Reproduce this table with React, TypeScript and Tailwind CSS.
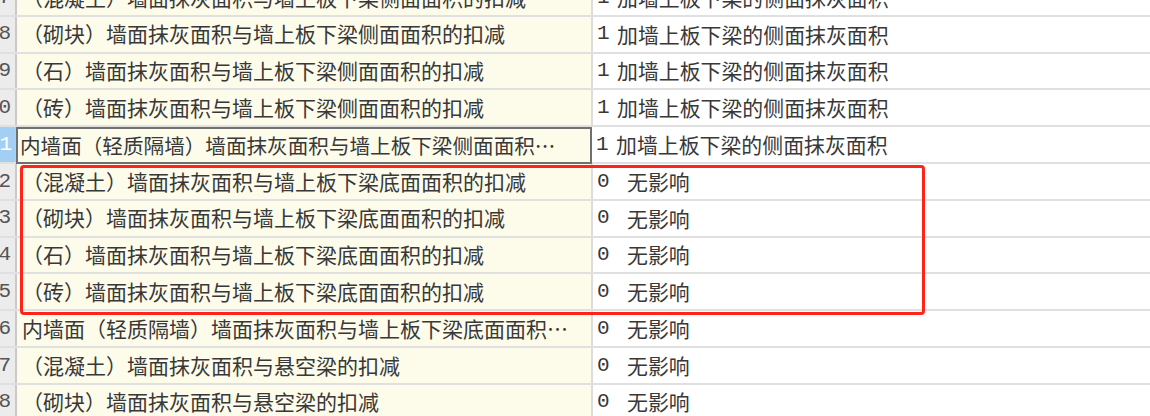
import React from 'react';

interface GridRow {
  no: string;
  name: string;
  value: string;
  desc: string;
}

const side = '加墙上板下梁的侧面抹灰面积';

const rows: GridRow[] = [
  { no: '97', name: '（混凝土）墙面抹灰面积与墙上板下梁侧面面积的扣减', value: '1', desc: side },
  { no: '98', name: '（砌块）墙面抹灰面积与墙上板下梁侧面面积的扣减', value: '1', desc: side },
  { no: '99', name: '（石）墙面抹灰面积与墙上板下梁侧面面积的扣减', value: '1', desc: side },
  { no: '100', name: '（砖）墙面抹灰面积与墙上板下梁侧面面积的扣减', value: '1', desc: side },
  { no: '101', name: '内墙面（轻质隔墙）墙面抹灰面积与墙上板下梁侧面面积…', value: '1', desc: side },
  { no: '102', name: '（混凝土）墙面抹灰面积与墙上板下梁底面面积的扣减', value: '0', desc: '无影响' },
  { no: '103', name: '（砌块）墙面抹灰面积与墙上板下梁底面面积的扣减', value: '0', desc: '无影响' },
  { no: '104', name: '（石）墙面抹灰面积与墙上板下梁底面面积的扣减', value: '0', desc: '无影响' },
  { no: '105', name: '（砖）墙面抹灰面积与墙上板下梁底面面积的扣减', value: '0', desc: '无影响' },
  { no: '106', name: '内墙面（轻质隔墙）墙面抹灰面积与墙上板下梁底面面积…', value: '0', desc: '无影响' },
  { no: '107', name: '（混凝土）墙面抹灰面积与悬空梁的扣减', value: '0', desc: '无影响' },
  { no: '108', name: '（砌块）墙面抹灰面积与悬空梁的扣减', value: '0', desc: '无影响' },
];

const selectedNo = '101';

export default function App() {
  return (
    <div className="relative w-[1150px] h-[416px] overflow-hidden bg-white text-[#383838] font-['Noto_Sans_CJK_SC',sans-serif]">
      <div className="-mt-[20px]">
        {rows.map(row => {
          const selected = row.no === selectedNo;
          return (
            <div key={row.no} className="flex h-[36.8px] border-b-2 border-[#e0e0e0]">
              {/* row header, numbers are clipped on the left */}
              <div
                className={
                  selected
                    ? 'w-[17px] shrink-0 flex items-center justify-end overflow-hidden pr-[3px] bg-[#a3cff5] text-white border-r-2 border-[#c9c9c9] font-["Liberation_Mono",monospace] text-[21px]'
                    : 'w-[17px] shrink-0 flex items-center justify-end overflow-hidden pr-[4px] bg-[#ececec] text-[#555] border-r-2 border-[#c9c9c9] font-["Liberation_Mono",monospace] text-[21px]'
                }
              >
                <span className="whitespace-nowrap">{row.no}</span>
              </div>

              {/* name */}
              <div
                className={
                  selected
                    ? 'w-[576px] shrink-0 flex items-center overflow-hidden whitespace-nowrap bg-[#fdfceb] pl-[2px] text-[20.6px] border-2 border-[#707070] -mb-[2px] -ml-[1px]'
                    : 'w-[576px] shrink-0 flex items-center overflow-hidden whitespace-nowrap bg-[#fdfceb] pl-[5px] text-[21px] border-r-2 border-[#dcdcdc]'
                }
              >
                {row.name}
              </div>

              {/* value + description */}
              <div className="flex-1 flex items-center whitespace-nowrap pl-[4px]">
                <span className="w-[20px] font-['Liberation_Mono',monospace] text-[21px]">{row.value}</span>
                <span className={row.value === '0' ? 'pl-[10px] text-[20.9px]' : 'text-[20.9px]'}>{row.desc}</span>
              </div>
            </div>
          );
        })}
      </div>

      {/* red highlight drawn over the grid */}
      <div className="absolute left-[20px] top-[165px] w-[905px] h-[150px] border-[3px] border-[#ff2419] rounded-[4px]" />
    </div>
  );
}
